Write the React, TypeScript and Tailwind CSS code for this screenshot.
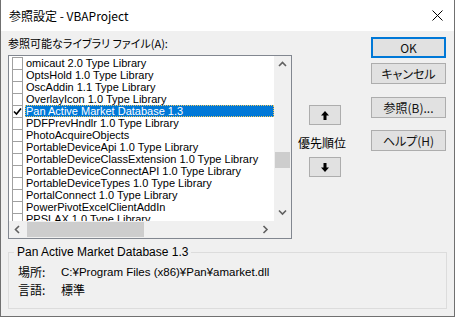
import React from 'react';

const jp = "font-['Noto_Sans_CJK_JP',sans-serif] [font-feature-settings:'palt']";
const lat = "font-['Liberation_Sans','Noto_Sans_CJK_JP',sans-serif]";

const items = [
    'omicaut 2.0 Type Library',
    'OptsHold 1.0 Type Library',
    'OscAddin 1.1 Type Library',
    'OverlayIcon 1.0 Type Library',
    'Pan Active Market Database 1.3',
    'PDFPrevHndlr 1.0 Type Library',
    'PhotoAcquireObjects',
    'PortableDeviceApi 1.0 Type Library',
    'PortableDeviceClassExtension 1.0 Type Library',
    'PortableDeviceConnectAPI 1.0 Type Library',
    'PortableDeviceTypes 1.0 Type Library',
    'PortalConnect 1.0 Type Library',
    'PowerPivotExcelClientAddIn',
    'PPSLAX 1.0 Type Library',
];

const Chevron = ({ dir }: { dir: 'up' | 'down' | 'left' | 'right' }) => {
    const d = {
        up: 'M1 5 L4.5 1.5 L8 5',
        down: 'M1 1.5 L4.5 5 L8 1.5',
        left: 'M5 1 L1.5 4.5 L5 8',
        right: 'M1.5 1 L5 4.5 L1.5 8',
    }[dir];
    const horiz = dir === 'left' || dir === 'right';
    return (
        <svg width={horiz ? 7 : 9} height={horiz ? 9 : 7} viewBox={horiz ? '0 0 7 9' : '0 0 9 7'}>
            <path d={d} fill="none" stroke="#606060" strokeWidth="1.6" />
        </svg>
    );
};

const Btn = ({ children, def }: { children: React.ReactNode; def?: boolean }) => (
    <div
        className={`w-[75px] h-[21px] flex items-center justify-center bg-[#e1e1e1] text-[12px] text-[#111] ${jp} ${
            def ? 'border-2 border-[#0078d7]' : 'border border-[#adadad]'
        }`}
    >
        {children}
    </div>
);

const ArrowBtn = ({ up }: { up?: boolean }) => (
    <div className="ml-[11px] w-[32px] h-[20px] flex items-center justify-center bg-[#e1e1e1] border border-[#adadad]">
        <svg width="8" height="9" viewBox="0 0 8 9" className={up ? '' : 'rotate-180'}>
            <polygon points="4,0 8,4.5 5.5,4.5 5.5,9 2.5,9 2.5,4.5 0,4.5" fill="#000" />
        </svg>
    </div>
);

export default function App() {
    return (
        <div className="w-[455px] h-[317px] flex flex-col border border-t-0 border-[#707070] bg-[#f0f0f0] overflow-hidden text-black">
            {/* Title bar */}
            <div className="h-[31px] bg-white flex items-center justify-between pl-[8px] pr-[11px]">
                <span className={`text-[12px] ${jp}`}>参照設定 - VBAProject</span>
                <svg width="11" height="11" viewBox="0 0 11 11">
                    <path d="M0.5 0.5 L10.5 10.5 M10.5 0.5 L0.5 10.5" stroke="#000" strokeWidth="1" />
                </svg>
            </div>

            <div className="flex-1 flex flex-col px-[7px]">
                <div className="flex">
                    {/* Library list */}
                    <div className="w-[284px] flex flex-col">
                        <div className={`mt-[5px] h-[14px] leading-[14px] text-[11px] ${jp}`}>参照可能なライブラリ ファイル(A):</div>
                        <div className="mt-[5px] h-[184px] border border-[#828790] bg-white flex flex-col">
                            <div className="flex-1 flex min-h-0">
                                <div className={`flex-1 overflow-hidden pt-[1px] pl-[3px] text-[11px] ${lat}`}>
                                    {items.map((name, i) => {
                                        const sel = i === 4;
                                        return (
                                            <div key={name} className="h-[12px] flex items-start">
                                                <div className="w-[11px] h-[13px] border border-[#a0a0a0] bg-white shrink-0 flex items-center justify-center">
                                                    {sel && (
                                                        <svg width="9" height="9" viewBox="0 0 9 9">
                                                            <path d="M1 4.5 L3.5 7 L8 1.5" fill="none" stroke="#000" strokeWidth="1.6" />
                                                        </svg>
                                                    )}
                                                </div>
                                                <div
                                                    className={`ml-[2px] flex-1 h-[12px] leading-[12px] px-[1px] whitespace-nowrap ${
                                                        sel ? 'bg-[#0078d7] text-white outline-1 outline-dotted outline-[#f0c860] -outline-offset-1' : ''
                                                    }`}
                                                >
                                                    {name}
                                                </div>
                                            </div>
                                        );
                                    })}
                                </div>
                                {/* vertical scrollbar */}
                                <div className="w-[17px] bg-[#f0f0f0] flex flex-col">
                                    <div className="h-[17px] flex items-center justify-center">
                                        <Chevron dir="up" />
                                    </div>
                                    <div className="flex-1">
                                        <div className="mt-[79px] mx-[1px] h-[16px] bg-[#cdcdcd]" />
                                    </div>
                                    <div className="h-[17px] flex items-center justify-center">
                                        <Chevron dir="down" />
                                    </div>
                                </div>
                            </div>
                            {/* horizontal scrollbar */}
                            <div className="h-[17px] flex bg-[#f0f0f0]">
                                <div className="w-[17px] flex items-center justify-center">
                                    <Chevron dir="left" />
                                </div>
                                <div className="flex-1 flex items-center">
                                    <div className="ml-[1px] w-[117px] h-[15px] bg-[#cdcdcd]" />
                                </div>
                                <div className="w-[17px] flex items-center justify-center">
                                    <Chevron dir="right" />
                                </div>
                                <div className="w-[17px]" />
                            </div>
                        </div>
                    </div>

                    {/* Priority */}
                    <div className="ml-[6px] w-[48px] flex flex-col mt-[74px]">
                        <ArrowBtn up />
                        <div className={`mt-[11px] h-[14px] leading-[14px] text-[12px] ${jp}`}>優先順位</div>
                        <div className="mt-[7px]">
                            <ArrowBtn />
                        </div>
                    </div>

                    {/* Buttons */}
                    <div className="ml-[25px] flex flex-col mt-[6px]">
                        <Btn def>OK</Btn>
                        <div className="mt-[5px]">
                            <Btn>キャンセル</Btn>
                        </div>
                        <div className="mt-[13px]">
                            <Btn>参照(B)...</Btn>
                        </div>
                        <div className="mt-[12px]">
                            <Btn>ヘルプ(H)</Btn>
                        </div>
                    </div>
                </div>

                {/* Group box */}
                <fieldset className="mt-[7px] w-[439px] h-[63px] border border-[#dcdcdc] px-0 pb-0 pt-0 m-0">
                    <legend className={`ml-[5px] px-[3px] text-[12px] leading-[13px] ${lat}`}>Pan Active Market Database 1.3</legend>
                    <div className="pl-[9px] mt-[6px] flex flex-col gap-[4px] text-[12px]">
                        <div className="h-[14px] leading-[14px] flex">
                            <span className={`w-[43px] ${jp}`}>場所:</span>
                            <span className={`text-[11.5px] ${lat}`}>C:¥Program Files (x86)¥Pan¥amarket.dll</span>
                        </div>
                        <div className="h-[14px] leading-[14px] flex">
                            <span className={`w-[43px] ${jp}`}>言語:</span>
                            <span className={jp}>標準</span>
                        </div>
                    </div>
                </fieldset>
            </div>
        </div>
    );
}
